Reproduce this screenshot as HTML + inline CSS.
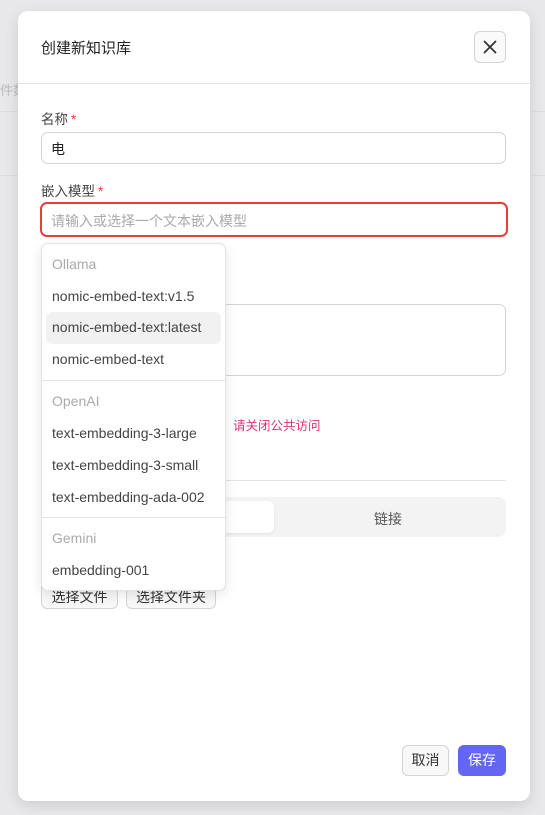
<!DOCTYPE html>
<html><head><meta charset="utf-8"><style>
*{box-sizing:border-box;margin:0;padding:0}
body{width:545px;height:815px;background:#e8e8eb;font-family:"Liberation Sans","Noto Sans CJK SC",sans-serif;position:relative;overflow:hidden;color:#222}
.abs{position:absolute}
.modal{left:18px;top:11px;width:512px;height:790px;background:#fff;border-radius:10px;box-shadow:0 4px 14px rgba(0,0,0,.12)}
.lbl{font-size:13.5px;color:#444}
.req{color:#e53e3e;margin-left:3px}
.inp{border:1px solid #d4d4d8;border-radius:7px;background:#fff}
.dd{left:41px;top:243px;width:185px;height:348px;background:#fff;border:1px solid #e2e2e5;border-radius:7px;box-shadow:0 4px 12px rgba(0,0,0,.1);font-size:14px;color:#444}
.dd div{position:absolute;left:10px}
.g{color:#aaa}
.hr{position:absolute;left:0!important;width:183px;height:1px;background:#e4e4e7}
.btn{border:1px solid #d4d4d8;border-radius:6px;background:#f8f8f8;font-size:14px;text-align:center;color:#333}
</style></head><body>
<div class="abs" style="left:0;top:80px;font-size:13px;color:#bbb">件数</div>
<div class="abs" style="left:0;top:111px;width:545px;height:1px;background:#ddd"></div>
<div class="abs" style="left:0;top:175px;width:545px;height:1px;background:#ddd"></div>
<div class="abs" style="left:512px;top:134px;font-size:14px;color:#ccc">t</div>
<div class="abs" style="left:512px;top:199px;font-size:14px;color:#ccc">t</div>
<div class="abs modal"></div>
<div class="abs" style="left:41px;top:37px;font-size:15px;color:#222">创建新知识库</div>
<div class="abs btn" style="left:474px;top:31px;width:32px;height:32px;border-radius:6px;background:#fafafa">
<svg width="30" height="30" viewBox="0 0 30 30"><path d="M9.5 9.5L20.5 20.5M20.5 9.5L9.5 20.5" stroke="#333" stroke-width="1.8" stroke-linecap="round"/></svg></div>
<div class="abs" style="left:18px;top:83px;width:512px;height:1px;background:#e4e4e7"></div>
<div class="abs lbl" style="left:41px;top:108px">名称<span class="req">*</span></div>
<div class="abs inp" style="left:41px;top:132px;width:465px;height:32px"></div>
<div class="abs" style="left:51px;top:139px;font-size:14px">电</div>
<div class="abs lbl" style="left:41px;top:180px">嵌入模型<span class="req">*</span></div>
<div class="abs" style="left:40px;top:202px;width:468px;height:35px;border:2px solid #e53e3e;border-radius:7px"></div>
<div class="abs" style="left:51px;top:211px;font-size:14px;color:#aaa">请输入或选择一个文本嵌入模型</div>
<div class="abs inp" style="left:41px;top:304px;width:465px;height:72px"></div>
<div class="abs" style="left:233px;top:415px;font-size:12.5px;color:#e0307a">请关闭公共访问</div>
<div class="abs" style="left:41px;top:480px;width:465px;height:1px;background:#e4e4e7"></div>
<div class="abs" style="left:41px;top:497px;width:465px;height:40px;background:#f3f3f4;border-radius:8px"></div>
<div class="abs" style="left:45px;top:501px;width:229px;height:32px;background:#fff;border-radius:6px;box-shadow:0 1px 2px rgba(0,0,0,.08)"></div>
<div class="abs" style="left:374px;top:509px;font-size:14px;color:#555">链接</div>
<div class="abs btn" style="left:41px;top:582px;width:77px;height:27px"><span style="position:relative;top:4px">选择文件</span></div>
<div class="abs btn" style="left:126px;top:582px;width:90px;height:27px"><span style="position:relative;top:4px">选择文件夹</span></div>
<div class="abs dd">
<div class="g" style="top:12px">Ollama</div>
<div style="top:44px">nomic-embed-text:v1.5</div>
<div style="left:4px;top:68px;width:175px;height:32px;background:#f1f1f2;border-radius:6px"></div>
<div style="top:75px">nomic-embed-text:latest</div>
<div style="top:107px">nomic-embed-text</div>
<div class="hr" style="top:136px"></div>
<div class="g" style="top:149px">OpenAI</div>
<div style="top:181px">text-embedding-3-large</div>
<div style="top:213px">text-embedding-3-small</div>
<div style="top:245px">text-embedding-ada-002</div>
<div class="hr" style="top:273px"></div>
<div class="g" style="top:286px">Gemini</div>
<div style="top:318px">embedding-001</div>
</div>
<div class="abs btn" style="left:402px;top:745px;width:47px;height:31px;line-height:29px">取消</div>
<div class="abs" style="left:458px;top:745px;width:48px;height:31px;line-height:31px;background:#6366f1;border-radius:6px;color:#fff;font-size:14px;text-align:center">保存</div>
</body></html>
